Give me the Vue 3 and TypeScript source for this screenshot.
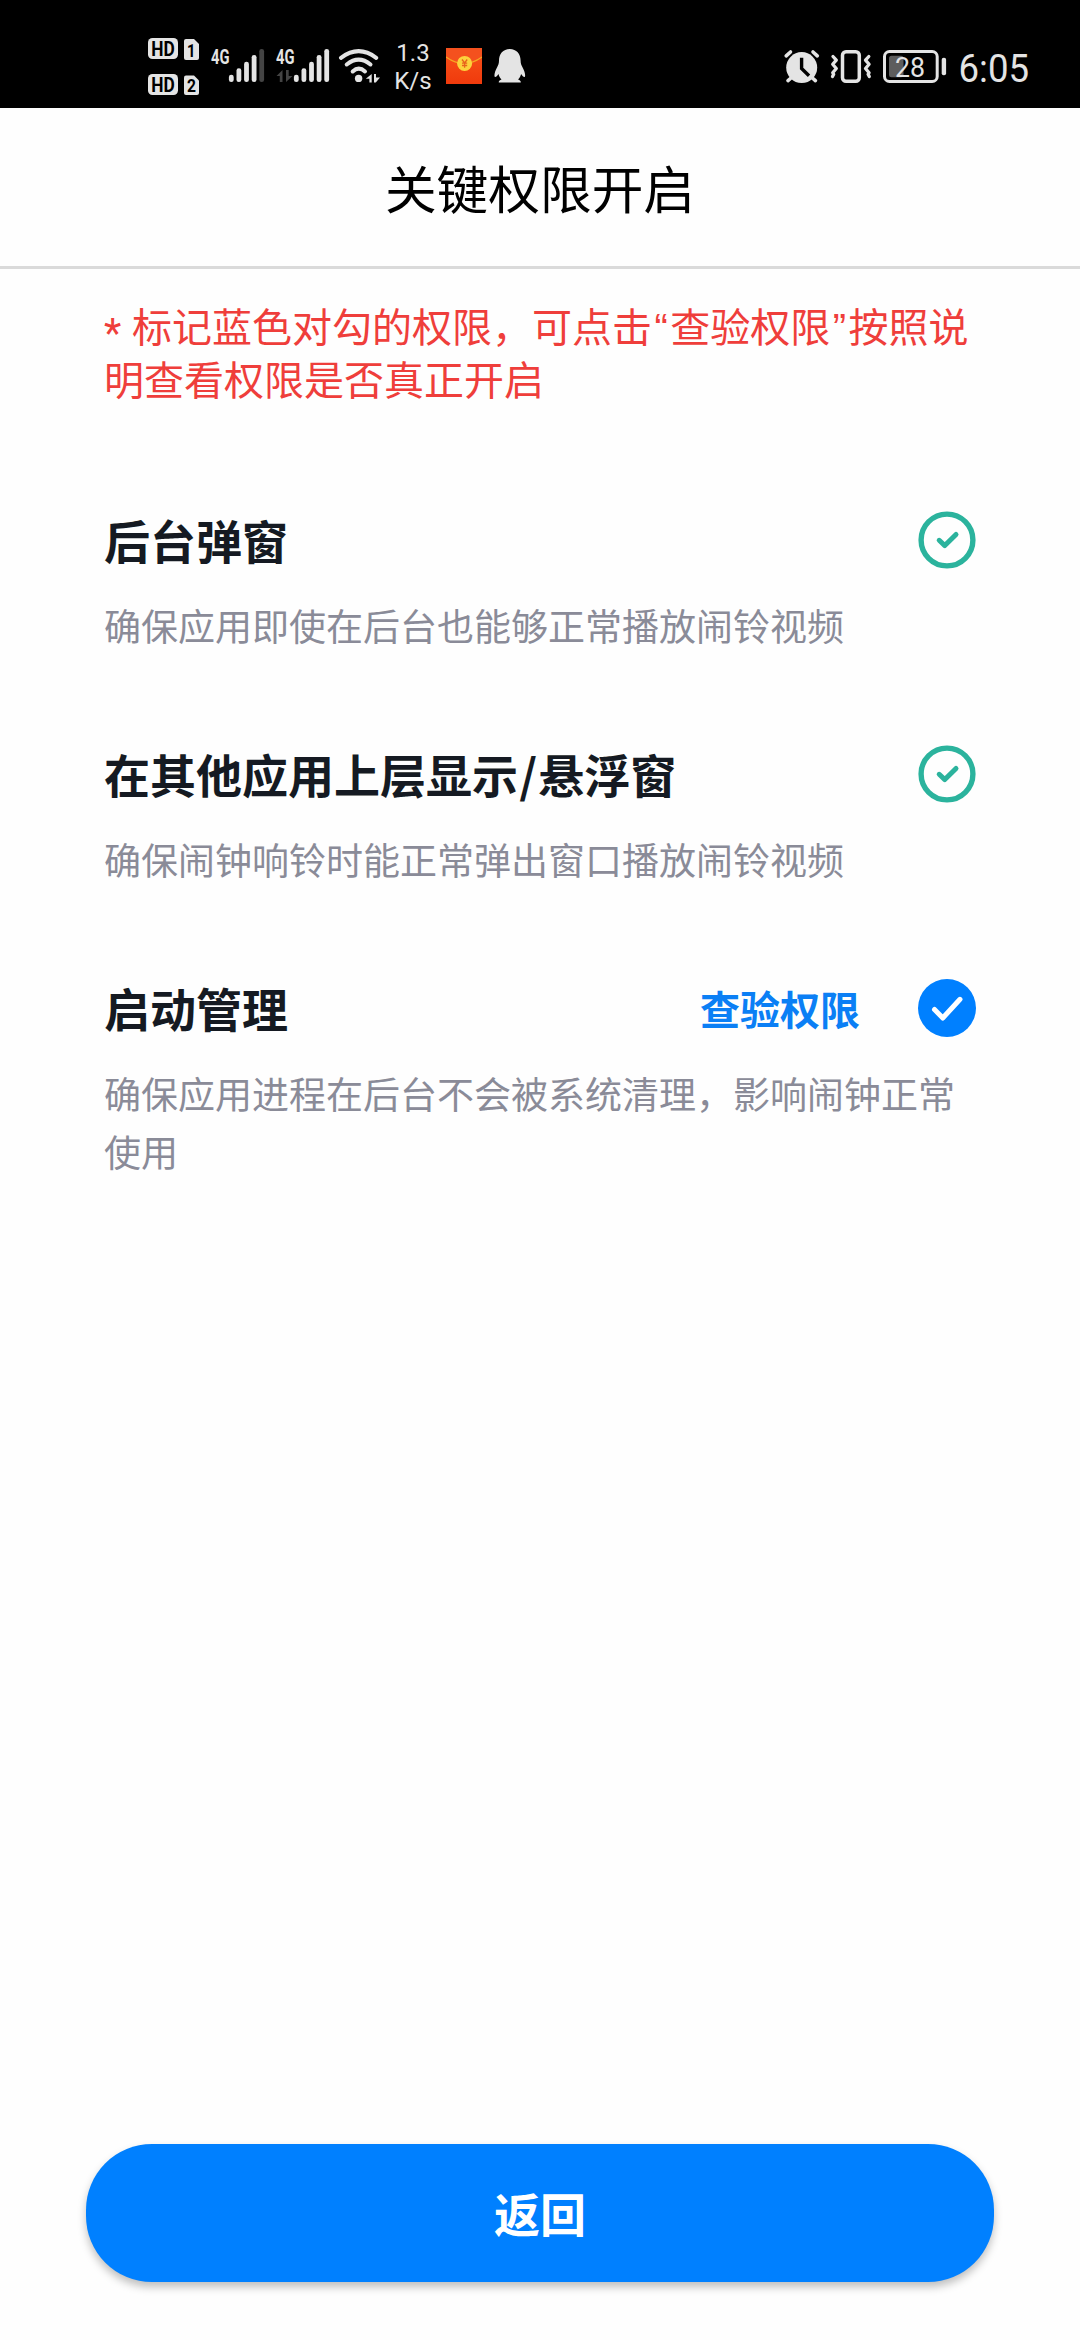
<script setup lang="ts">
interface Permission {
  title: string
  desc: string
  verifiable: boolean
}

const permissions: Permission[] = [
  { title: '后台弹窗', desc: '确保应用即使在后台也能够正常播放闹铃视频', verifiable: false },
  { title: '在其他应用上层显示/悬浮窗', desc: '确保闹钟响铃时能正常弹出窗口播放闹铃视频', verifiable: false },
  { title: '启动管理', desc: '确保应用进程在后台不会被系统清理，影响闹钟正常使用', verifiable: true },
]

const barTops = [74.7, 68.3, 61.7, 55, 49]
</script>

<template>
  <div class="screen">
    <div class="status">
      <svg class="sim" width="54" height="62" viewBox="147 36 54 62">
        <g fill="#e4e4e4">
          <rect x="148" y="38" width="30" height="21" rx="4.5" />
          <rect x="148" y="74" width="30" height="21" rx="4.5" />
          <path d="M186 39h8l5 5v14q0 2-2 2h-11q-2 0-2-2v-17q0-2 2-2z" />
          <path d="M186 75.500h8l5 5v12.500q0 2-2 2h-11q-2 0-2-2v-15.500q0-2 2-2z" />
        </g>
        <g class="glyph" fill="#000" font-size="20">
          <text x="151.300" y="55.700" textLength="23.500" lengthAdjust="spacingAndGlyphs">HD</text>
          <text x="151.300" y="91.700" textLength="23.500" lengthAdjust="spacingAndGlyphs">HD</text>
          <text x="187" y="56.500" font-size="18" textLength="8.500" lengthAdjust="spacingAndGlyphs">1</text>
          <text x="187" y="92" font-size="18" textLength="9" lengthAdjust="spacingAndGlyphs">2</text>
        </g>
      </svg>
      <svg class="signal-a" width="56" height="38" viewBox="210 46 56 38">
        <text class="glyph" x="211" y="63.800" font-size="21" fill="#e4e4e4" textLength="18.500" lengthAdjust="spacingAndGlyphs">4G</text>
        <rect
          v-for="(top, i) in barTops" :key="i"
          :x="228.900 + i * 7.600" :y="top" width="4.800" :height="82 - top" rx="2.300"
          :fill="i === 4 ? '#444' : '#e4e4e4'"
        />
      </svg>
      <svg class="signal-b" width="56" height="38" viewBox="275 46 56 38">
        <text class="glyph" x="276" y="63.800" font-size="21" fill="#e4e4e4" textLength="18.500" lengthAdjust="spacingAndGlyphs">4G</text>
        <path d="M282.500 70v12h-2.700v-6h-3.300zM286 70h2.700v6h3.800l-6.500 6z" fill="#444" />
        <rect
          v-for="(top, i) in barTops" :key="i"
          :x="293.900 + i * 7.600" :y="top" width="4.800" :height="82 - top" rx="2.300" fill="#e4e4e4"
        />
      </svg>
      <svg class="wifi" width="42" height="38" viewBox="338 47 42 38">
        <g fill="none" stroke="#e4e4e4" stroke-width="4" stroke-linecap="round">
          <path d="M341 57.800Q358.700 44.500 376.200 57.800" />
          <path d="M346.700 64.500Q358.700 54.700 370.500 64.500" />
          <path d="M352.700 71.500Q358.700 65.800 365 71.500" />
        </g>
        <circle cx="358.600" cy="78.400" r="3.700" fill="#e4e4e4" />
        <path d="M371.700 74v8.500h-2.300v-3.700h-3.600zM374 74h2v3.500h4l-4.200 5h-1.800z" fill="#e4e4e4" />
      </svg>
      <div class="speed"><span>1.3</span><span>K/s</span></div>
      <svg class="packet" width="36" height="36" viewBox="0 0 36 36">
        <defs>
          <linearGradient id="packet-red" x1="0" y1="0" x2="0" y2="1">
            <stop offset="0" stop-color="#f8531b" />
            <stop offset="1" stop-color="#f03a0c" />
          </linearGradient>
        </defs>
        <rect width="36" height="36" fill="url(#packet-red)" />
        <path d="M0 9Q18 23 36 9V0H0z" fill="#f4511e" />
        <path d="M0 9Q18 22 36 9" fill="none" stroke="#f6a623" stroke-width="1.200" />
        <circle cx="18.600" cy="15.400" r="7.500" fill="#fcd23c" />
        <path d="M16 11.500l2.600 3.500 2.600-3.500M18.600 15v4.700M16 15.200h5.200M16 17.500h5.200" fill="none" stroke="#e8641c" stroke-width="1.300" />
      </svg>
      <svg class="penguin" width="32" height="36" viewBox="0 0 32 36">
        <path d="M15.800 1C9 1 5 6 5 12.500c0 3-.7 4.500-2 7C.8 23.500 0 27 .7 28.800c.8.900 2.300-.600 3.800-2.800.5 2.300 1.400 4 3 5.400-1.600.5-3 1.300-2.700 3h22c.2-1.700-1.200-2.500-2.700-3 1.500-1.400 2.500-3.100 3-5.400 1.500 2.200 3 3.700 3.800 2.800.7-1.800-.2-5.300-2.300-9.300-1.300-2.500-2-4-2-7C26.600 6 22.500 1 15.800 1z" fill="#e4e4e4" />
      </svg>
      <svg class="alarm" width="38" height="36" viewBox="783 49 38 36">
        <circle cx="801.700" cy="67.600" r="15.500" fill="#e4e4e4" />
        <path d="M786.200 55.800l4.300-3.800M813 52l4.300 3.800M791 78l-3 2.600M812.400 78l3 2.600" stroke="#e4e4e4" stroke-width="3.600" stroke-linecap="round" />
        <path d="M801.600 59.500v9l6.200 6" fill="none" stroke="#000" stroke-width="3.400" stroke-linecap="square" />
      </svg>
      <svg class="vibrate" width="42" height="36" viewBox="829.500 49 42 36">
        <g fill="none" stroke="#e4e4e4" stroke-width="3.500" stroke-linejoin="round" stroke-linecap="round">
          <rect x="842" y="51.800" width="16.800" height="29.400" rx="3.500" />
          <path d="M832.500 56.500l3.300 3.600-3.600 4.200 3.600 4.200-3.600 4.200 1 1.600-1.200 2.200" stroke-width="3.300" />
          <path d="M868.300 56.500l-3.300 3.600 3.600 4.200-3.600 4.200 3.600 4.200-1 1.600 1.200 2.200" stroke-width="3.300" />
        </g>
      </svg>
      <svg class="battery" width="65" height="36" viewBox="882 49 65 36">
        <rect x="889" y="55.800" width="14.500" height="21.400" rx="2.500" fill="#5d5d5d" />
        <rect x="884.500" y="51.500" width="52.700" height="30" rx="5" fill="none" stroke="#e4e4e4" stroke-width="3" />
        <rect x="941.700" y="57.700" width="4.400" height="17.500" rx="2" fill="#e4e4e4" />
        <text class="digits" x="895" y="77" font-size="28.500" fill="#e4e4e4" textLength="30" lengthAdjust="spacingAndGlyphs">28</text>
      </svg>
      <svg class="clock" width="80" height="50" viewBox="954 42 80 50">
        <text class="digits" x="958.500" y="81.700" font-size="38" fill="#e4e4e4" textLength="70.500" lengthAdjust="spacingAndGlyphs">6:05</text>
      </svg>
    </div>

    <header class="header">关键权限开启</header>

    <main class="content">
      <p class="notice"><span class="star">*</span> 标记蓝色对勾的权限，可点击<span class="quote">“</span>查验权限<span class="quote">”</span>按照说明查看权限是否真正开启</p>
      <section v-for="item in permissions" :key="item.title" class="item">
        <div class="row">
          <h2 class="title">
            <template v-for="(part, i) in item.title.split('/')" :key="i"><span v-if="i > 0" class="slash">/</span>{{ part }}</template>
          </h2>
          <a v-if="item.verifiable" class="verify">查验权限</a>
          <svg class="mark" width="58" height="58" viewBox="0 0 58 58">
            <template v-if="item.verifiable">
              <circle cx="29" cy="29" r="29" fill="#0080ff" />
              <path d="M16.500 30.500l8.300 8.500L42 20.300" fill="none" stroke="#fff" stroke-width="5" stroke-linecap="round" stroke-linejoin="round" />
            </template>
            <template v-else>
              <circle cx="29" cy="29" r="25.900" fill="none" stroke="#2bb39d" stroke-width="5.400" />
              <path d="M21.200 29.300l5.600 5.300L38 23.400" fill="none" stroke="#2bb39d" stroke-width="5" stroke-linecap="round" stroke-linejoin="round" />
            </template>
          </svg>
        </div>
        <p class="desc">{{ item.desc }}</p>
      </section>
    </main>

    <button class="back" type="button">返回</button>
  </div>
</template>

<style>
body {
  margin: 0;
}
</style>

<style scoped>
.screen {
  display: flex;
  flex-direction: column;
  box-sizing: border-box;
  width: 1080px;
  height: 2340px;
  padding-bottom: 58px;
  background: #fefefe;
  font-family: "Noto Sans CJK SC", "Noto Sans", sans-serif;
  overflow: hidden;
}
.status {
  display: flex;
  align-items: flex-start;
  box-sizing: border-box;
  height: 108px;
  flex: none;
  background: #000;
  color: #e4e4e4;
}
.status svg {
  flex: none;
  display: block;
}
.glyph {
  font-family: Roboto, sans-serif;
  font-weight: 700;
}
.digits {
  font-family: Roboto, sans-serif;
  font-weight: 400;
}
.sim { margin: 36px 0 0 147px; }
.signal-a { margin: 46px 0 0 9px; }
.signal-b { margin: 46px 0 0 9px; }
.wifi { margin: 47px 0 0 7px; }
.speed {
  display: flex;
  flex-direction: column;
  align-items: center;
  width: 50px;
  margin: 39px 0 0 8px;
  font: 400 24px/28px Roboto, sans-serif;
}
.packet { margin: 48px 0 0 8px; }
.penguin { margin: 48px 0 0 12px; }
.alarm { margin: 49px 0 0 257px; }
.vibrate { margin: 49px 0 0 8.500px; }
.battery { margin: 49px 0 0 10.500px; }
.clock { margin: 42px 0 0 7px; }
.header {
  display: flex;
  flex: none;
  align-items: center;
  justify-content: center;
  box-sizing: border-box;
  height: 161px;
  padding-bottom: 2px;
  border-bottom: 3px solid #dadada;
  color: #000;
  font-size: 51.700px;
}
.content {
  padding: 30px 104px 0;
}
.notice {
  margin: 0 0 106px;
  color: #ef3e3b;
  font-size: 40px;
  line-height: 53px;
}
.star {
  font-family: Roboto, sans-serif;
  line-height: 1;
  position: relative;
  top: 5px;
  letter-spacing: 1.700px;
}
.quote {
  margin-left: 2.500px;
  letter-spacing: 2.500px;
  line-height: 1;
  font-family: "Liberation Sans", sans-serif;
}
.item {
  margin-bottom: 91px;
}
.row {
  display: flex;
  align-items: center;
  height: 58px;
}
.title {
  flex: 1;
  margin: 0;
  padding-bottom: 2px;
  color: #151a22;
  font-size: 46px;
  font-weight: 700;
  line-height: 56px;
}
.slash {
  margin: 0 1.200px;
}
.verify {
  margin-right: 58px;
  color: #0b7ff5;
  font-size: 40px;
  font-weight: 700;
  line-height: 58px;
}
.mark {
  flex: none;
}
.desc {
  margin: 27px 0 0;
  color: #8a8b98;
  font-size: 37px;
  line-height: 58px;
}
.back {
  flex: none;
  height: 138px;
  margin: auto 86px 0;
  padding: 0 0 2px;
  border: 0;
  border-radius: 66px;
  background: #0080ff;
  box-shadow: 0 5px 9px rgba(0, 0, 0, 0.25);
  color: #fff;
  font-family: inherit;
  font-size: 46px;
  font-weight: 700;
}
</style>
